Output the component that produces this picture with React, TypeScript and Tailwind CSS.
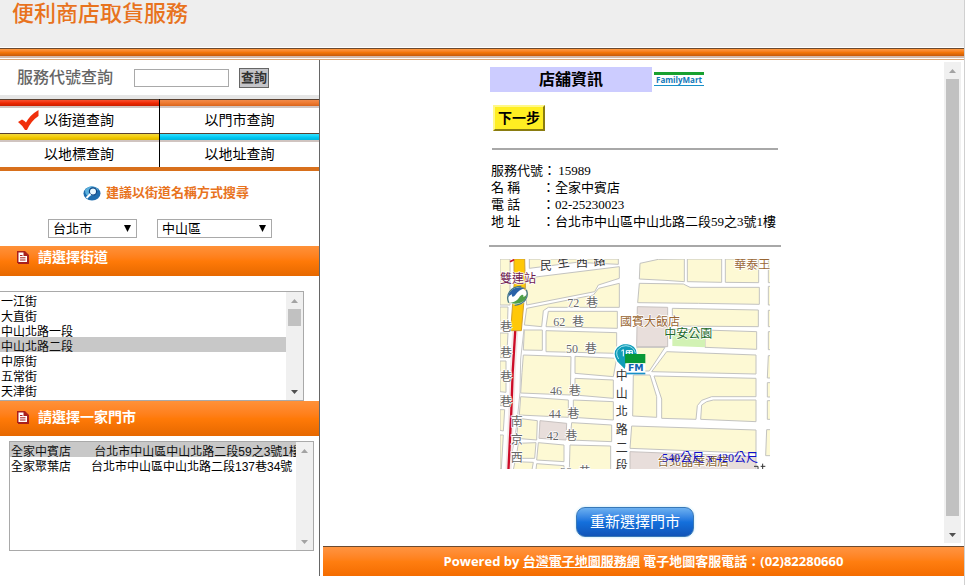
import { useState } from 'react';
import clsx from 'clsx';

const streets = ['一江街', '大直街', '中山北路一段', '中山北路二段', '中原街', '五常街', '天津街'];

const stores = [
  { id: '15989', label: '全家中賓店' + '\u00a0'.repeat(7) + '台北市中山區中山北路二段59之3號1樓' },
  { id: '12034', label: '全家聚葉店' + '\u00a0'.repeat(6) + '台北市中山區中山北路二段137巷34號' },
];

const tabs = [
  { label: '以街道查詢', stripe: 'from-[#f5502c] via-[#f02800] to-[#c81e00]', pad: 'pl-[44px]' },
  { label: '以門市查詢', stripe: 'from-[#f08a4a] via-[#ee7a30] to-[#d8641c]', pad: 'pl-[45px]' },
  { label: '以地標查詢', stripe: 'from-[#f0d838] via-[#f5cc00] to-[#dcb400]', pad: 'pl-[44px]' },
  { label: '以地址查詢', stripe: 'from-[#30e0ff] via-[#00ccf5] to-[#00b4dc]', pad: 'pl-[45px]' },
];

const details = [
  { label: '服務代號', value: '\u00a015989' },
  { label: '名 稱', value: '全家中賓店' },
  { label: '電 話', value: '02-25230023' },
  { label: '地 址', value: '台北市中山區中山北路二段59之3號1樓' },
];

// city blocks, map units are a third of a pixel
const blocks = [
  '0,0 30,0 30,138 0,138',
  '0,144 24,144 22,210 0,210',
  '0,222 24,222 20,296 0,296',
  '0,306 18,306 18,400 0,398',
  '0,410 16,410 14,440 0,440',
  '0,452 14,452 10,516 0,514',
  '0,528 10,528 4,630 0,630',
  '88,0 355,0 355,16 230,10 88,28',
  '75,58 358,23 358,58 295,78 284,98 80,138',
  '80,148 280,108 296,88 358,73 358,145 145,145 130,155 125,203 73,198',
  '145,157 352,157 352,208 138,203',
  '73,213 127,213 127,274 70,273',
  '138,215 350,221 350,283 138,278',
  '70,288 213,293 211,408 62,402 66,340',
  '225,292 350,298 340,353 225,343',
  '225,358 340,363 340,418 225,408',
  '62,413 205,423 205,475 58,468',
  '220,423 340,428 340,483 220,475',
  '55,478 112,485 110,543 50,538',
  '215,491 335,498 335,548 210,543',
  '55,553 108,551 104,598 48,598',
  '115,551 192,558 192,608 110,603',
  '210,558 332,561 332,632 208,632',
  '45,608 100,610 96,632 40,632',
  '110,614 192,620 192,632 108,632',
  '420,13 475,1 553,0 553,68 495,64 418,60',
  '562,0 665,0 665,70 562,68',
  '676,0 776,0 776,71 676,70',
  '418,73 550,75 570,85 778,85 778,136 595,133 413,131',
  '517,148 775,153 775,203 517,201',
  '517,210 770,218 770,271 615,265 615,223 517,223',
  '410,265 495,265 448,336 430,336 410,290',
  '500,278 768,288 768,345 455,338',
  '462,351 768,358 768,413 635,413 605,424 592,440 588,481 485,478 485,420',
  '400,348 450,348 470,413 470,475 398,471',
  '640,423 768,423 768,488 602,481 605,438 620,428',
  '395,501 768,513 768,583 390,568',
  '805,0 812,0 812,71 805,71',
  '805,82 812,82 812,138 805,138',
  '805,154 812,154 812,203 805,203',
  '805,218 812,218 812,272 805,272',
  '805,290 812,290 812,357 802,357',
  '802,371 812,371 812,414 802,414',
  '802,425 812,425 812,481 802,481',
  '800,512 812,512 812,590 797,590',
];

const shadedBlocks = [
  '412,143 503,145 503,263 410,263',
  '120,485 200,493 198,543 117,538',
  '390,578 768,593 768,632 390,632',
];

const lanes = [
  { no: '72', x: 202, y: 143 },
  { no: '62', x: 160, y: 200 },
  { no: '50', x: 198, y: 282 },
  { no: '46', x: 150, y: 408 },
  { no: '44', x: 146, y: 477 },
  { no: '42', x: 140, y: 543 },
  { no: '38', x: 180, y: 652 },
];

function Arrow({ up, color }: { up?: boolean; color: string }) {
  return (
    <svg width="7" height="4" viewBox="0 0 7 4" fill={color}>
      <path d={up ? 'M3.5 0L7 4H0Z' : 'M0 0H7L3.5 4Z'} />
    </svg>
  );
}

function ScrollRail({ thumb, up, down }: { thumb?: string; up: string; down: string }) {
  return (
    <div aria-hidden="true" className="flex w-[17px] shrink-0 flex-col items-center bg-[#f0f0f0]">
      <div className="flex h-[17px] w-full items-center justify-center">
        <Arrow up color={up} />
      </div>
      <div className="flex w-[13px] flex-1 flex-col">
        {thumb && <div className={clsx('bg-[#c1c1c1]', thumb)} />}
      </div>
      <div className="flex h-[17px] w-full items-center justify-center">
        <Arrow color={down} />
      </div>
    </div>
  );
}

function DropDown({ label, options, className }: { label: string; options: string[]; className: string }) {
  return (
    <div className={clsx('relative', className)}>
      <select
        aria-label={label}
        className="block h-[19px] w-full appearance-none border border-[#a9a9a9] bg-white pl-[4px] text-[13px] leading-[17px] text-black"
      >
        {options.map(o => (
          <option key={o}>{o}</option>
        ))}
      </select>
      <svg className="pointer-events-none absolute top-[6px] right-[6px]" width="7" height="7" viewBox="0 0 7 7">
        <path d="M0 0H7L3.5 7Z" />
      </svg>
    </div>
  );
}

function SectionBar({ title, className }: { title: string; className: string }) {
  return (
    <div className={clsx('flex gap-[9px] bg-gradient-to-b from-[#ff9138] via-[#ff7a08] to-[#e66800] pl-[17px]', className)}>
      <svg className="mt-[3px]" width="12" height="13" viewBox="0 0 12 13">
        <path d="M0 0H8L12 4V13H1V12H0Z" fill="#a8201c" />
        <path d="M1.5 1.5H6.5V5H10V11H1.5Z" fill="#fff" />
        <path d="M3 4.5H5.5M3 6.8H8.5M3 9H8.5" stroke="#a8201c" />
      </svg>
      <h2 className="text-[14px] leading-[18px] font-bold text-white">{title}</h2>
    </div>
  );
}

function StoreMap() {
  return (
    <svg width="270" height="210" viewBox="0 0 810 630" role="img" aria-label="店舖位置地圖" className="overflow-hidden">
      <rect width="810" height="630" fill="#fff" />
      <g fill="#fdf9d4" stroke="#c3c3c0" strokeWidth="3">
        {blocks.map(points => (
          <polygon key={points} points={points} />
        ))}
      </g>
      <g fill="#e8dedb" stroke="#c8c2c0" strokeWidth="3">
        {shadedBlocks.map(points => (
          <polygon key={points} points={points} />
        ))}
      </g>
      <path d="M517 223H615V265L517 261Z" fill="#d2f2b4" />
      <path d="M72 210L62 300L60 400L50 500L28 630" fill="none" stroke="#c8c8c8" strokeWidth="3" />
      <path d="M46 210L38 340L34 455L25 640" fill="none" stroke="#f4e8e8" strokeWidth="18" />
      <path d="M46 210L38 340L34 455L25 640" fill="none" stroke="#cc0c28" strokeWidth="7" />
      <path d="M42 0H74L76 80L64 215H32L42 80Z" fill="#ffc808" stroke="#d0a030" strokeWidth="3" />
      <path d="M30 8L42 2" stroke="#cc0c28" strokeWidth="5" />

      <ellipse cx="52" cy="111" rx="31" ry="27" fill="#fff" />
      <path d="M24 116C26 90 52 78 78 88C62 90 54 98 46 108C40 116 34 114 36 106Q28 108 24 116Z" fill="#2a62a8" />
      <path d="M81 104C80 128 56 140 30 131C46 130 52 124 60 112C66 104 72 106 70 114Q77 112 81 104Z" fill="#50a048" />
      <path d="M26 131C16 106 32 82 64 82M79 92C88 114 74 136 44 139" fill="none" stroke="#4a7a80" strokeWidth="4" />

      <g className="font-['Noto_Sans_CJK_TC',sans-serif] text-[36px]" stroke="#fff" strokeWidth="4" paintOrder="stroke">
        <g fill="#333">
          <text x="120" y="34">民</text>
          <text x="174" y="26" transform="rotate(-8 174 26)">生</text>
          <text x="228" y="24">西</text>
          <text x="282" y="22" transform="rotate(-10 282 22)">路</text>
          {['中', '山', '北', '路', '二', '段'].map((c, i) => (
            <text key={c} x="347" y={363 + i * 54}>{c}</text>
          ))}
        </g>
        <g fill="#666">
          {lanes.map(l => (
            <g key={l.no}>
              <text x={l.x} y={l.y} className="font-['Liberation_Serif',serif]">{l.no}</text>
              <text x={l.x + 56} y={l.y}>巷</text>
            </g>
          ))}
          {[216, 294, 366, 441].map(y => (
            <text key={y} x="0" y={y}>巷</text>
          ))}
          {['南', '京', '西'].map((c, i) => (
            <text key={c} x="32" y={501 + i * 54}>{c}</text>
          ))}
        </g>
        <text x="0" y="72" fill="#702050">雙連站</text>
        <text x="360" y="201" fill="#996633">國賓大飯店</text>
        <text x="493" y="237" fill="#226a2a">中安公園</text>
        <text x="703" y="30" fill="#996633">華泰王</text>
        <text x="472" y="621" fill="#8a6634">台北晶華酒店</text>
      </g>
      <path d="M762 622H774V634M782 622H796M788 614V634" fill="none" stroke="#333" strokeWidth="3" />
      <text x="486" y="608" fill="#1010c8" className="font-['Liberation_Serif','Noto_Sans_CJK_TC',serif] text-[36px]">
        540公尺 x 420公尺
      </text>

      <path d="M375 334L350 308Q334 282 350 265Q362 253 378 253Q412 256 412 285V290H378V322Z" fill="#109cb8" stroke="#fff" strokeWidth="4" />
      <path d="M356 300Q344 280 356 269Q364 260 378 260Q402 262 406 282" fill="none" stroke="#a0e4f0" strokeWidth="3" />
      <path d="M364 276L370 272V292M379 275H397V288H379ZM388 275V288M379 281H397" fill="none" stroke="#fff" strokeWidth="3" />
      <rect x="375" y="285" width="61" height="28" fill="#089838" />
      <rect x="379" y="313" width="57" height="28" fill="#fff" />
      <text x="384" y="337" fill="#1060b0" className="font-['DejaVu_Sans',sans-serif] text-[28px] font-bold">FM</text>
      <rect x="379" y="341" width="57" height="5" fill="#1890c8" />
    </svg>
  );
}

export default function App() {
  const [street, setStreet] = useState('中山北路二段');
  const [store, setStore] = useState('15989');

  return (
    <div className="flex min-h-screen flex-col border-r border-[#d0d0d0] bg-white font-['Liberation_Sans','Noto_Sans_CJK_TC',sans-serif] text-black">
      <header>
        <div className="h-[47px] bg-[#eeeeee] pl-[12px]">
          <h1 className="text-[22px] leading-[28px] font-medium text-[#e8731e]">便利商店取貨服務</h1>
        </div>
        <div className="mt-px h-[8px] border-t border-[#6b4a30] bg-gradient-to-b from-[#ff9a40] via-[#f47608] to-[#c85a08]" />
        <div className="h-[2px] bg-[#d4b8a8]" />
        <div className="mt-px h-px bg-[#dca878]" />
      </header>

      <div className="flex">
        <aside className="w-[320px] shrink-0 border-r border-[#666] pb-[25px]">
          <form className="flex h-[35px] items-center pl-[17px]" onSubmit={e => e.preventDefault()}>
            <label htmlFor="service-code" className="w-[117px] text-[16px] leading-[20px] font-medium text-[#666]">
              服務代號查詢
            </label>
            <input id="service-code" type="text" className="h-[18px] w-[95px] border border-[#a9a9a9] px-1 text-[12px]" />
            <button
              type="submit"
              className="ml-[10px] h-[20px] w-[30px] border border-[#666] bg-[#c4c4c8] text-[13px] leading-[18px] font-bold text-[#333]"
            >
              查詢
            </button>
          </form>
          <div className="h-[4px] bg-[#e6e6e6]" />

          <nav className="grid grid-cols-2 border-b-4 border-[#d8701c]">
            {tabs.map((tab, i) => (
              <a
                key={tab.label}
                href="#"
                className={clsx('relative flex h-[34px] flex-col', i % 2 === 0 && 'border-r border-black')}
              >
                <span className={clsx('h-[7px] border-t border-[#5a4030] bg-gradient-to-b', tab.stripe)} />
                <span className="h-[2px] bg-[#d0c4c0]" />
                <span className={clsx('pt-[3px] text-[14px] leading-[19px]', tab.pad)}>{tab.label}</span>
                {i === 0 && (
                  <svg className="absolute top-[11px] left-[18px]" width="21" height="21" viewBox="0 0 21 21">
                    <path d="M0 12L4 9.5Q7 11 8 12.5Q12 5 20.5 0V6Q13 11 9 20H7Q4 15 0 12Z" fill="#f0300c" />
                  </svg>
                )}
              </a>
            ))}
          </nav>

          <div className="flex h-[43px] items-center justify-center gap-[5px] pl-[13px]">
            <svg width="18" height="16" viewBox="0 0 18 16">
              <ellipse cx="9" cy="8.5" rx="8.5" ry="7" fill="#1c6cae" />
              <path d="M2 5Q8-2 15 4Q12 12 8 11Q2 12 2 5Z" fill="#5cb0dc" />
              <circle cx="10" cy="6.5" r="3.6" fill="#e8f8ff" stroke="#0c4484" strokeWidth="1.2" />
              <path d="M7.5 9L3.5 13" stroke="#fff" strokeWidth="2" />
            </svg>
            <p className="text-[13px] leading-[18px] font-bold text-[#e8731e]">建議以街道名稱方式搜尋</p>
          </div>

          <div className="flex h-[32px] gap-[20px] pt-[5px] pl-[48px]">
            <DropDown label="縣市" options={['台北市']} className="w-[89px]" />
            <DropDown label="行政區" options={['中山區']} className="w-[115px]" />
          </div>

          <SectionBar title="請選擇街道" className="h-[30px] pt-[2px]" />

          <div className="mt-[15px] flex h-[110px] w-[304px] border border-l-0 border-[#a9a9a9]">
            <select
              size={7}
              aria-label="街道"
              value={street}
              onChange={e => setStreet(e.target.value)}
              className="min-w-0 flex-1 overflow-hidden text-[12px] [scrollbar-width:none]"
            >
              {streets.map(s => (
                <option key={s} className="h-[15px] min-h-0 p-0 pl-px leading-[15px] checked:bg-[#c8c8c8]">{s}</option>
              ))}
            </select>
            <ScrollRail thumb="h-[17px]" up="#a3a3a3" down="#505050" />
          </div>

          <SectionBar title="請選擇一家門市" className="h-[35px] pt-[7px]" />

          <div className="mt-[5px] ml-[9px] flex h-[110px] w-[305px] border border-[#a9a9a9]">
            <select
              size={7}
              aria-label="門市"
              value={store}
              onChange={e => setStore(e.target.value)}
              className="min-w-0 flex-1 overflow-hidden text-[12px] [scrollbar-width:none]"
            >
              {stores.map(s => (
                <option key={s.id} value={s.id} className="h-[15px] min-h-0 p-0 pl-px leading-[15px] checked:bg-[#c8c8c8]">
                  {s.label}
                </option>
              ))}
            </select>
            <ScrollRail up="#a3a3a3" down="#a3a3a3" />
          </div>
        </aside>

        <div className="flex min-w-0 flex-1 flex-col pl-[3px]">
          <div className="flex flex-1 pt-[2px] pr-[3px] pb-[3px]">
            <main className="flex flex-1 justify-center pl-[3px]">
              <div className="flex w-[292px] flex-col">
                <div className="mt-[5px] ml-px flex items-center gap-[2px]">
                  <h2 className="w-[162px] bg-[#ccccff] text-center text-[16px] leading-[25px] font-bold">店舖資訊</h2>
                  <svg width="50" height="15" viewBox="0 0 50 15" role="img" aria-label="FamilyMart">
                    <rect width="50" height="3" fill="#18a030" />
                    <text
                      x="25"
                      y="11"
                      textAnchor="middle"
                      fill="#1078b8"
                      className="font-['Open_Sans',sans-serif] text-[8px] font-bold"
                    >
                      FamilyMart
                    </text>
                    <rect y="13" width="50" height="1" fill="#1890c8" />
                  </svg>
                </div>
                <button
                  type="button"
                  className="mt-[13px] ml-[4px] h-[26px] w-[52px] border-2 border-t-[#fff888] border-r-[#8a7c10] border-b-[#8a7c10] border-l-[#fff888] bg-[#ffee22] text-[14px] leading-[20px] font-bold"
                >
                  下一步
                </button>
                <hr className="mt-[17px] mr-[3px] ml-[3px] border-t-2 border-[#a8a8a8]" />
                <dl className="mt-[12px] ml-[2px] font-['Liberation_Serif','Noto_Sans_CJK_TC',serif] text-[13px] leading-[17px]">
                  {details.map(d => (
                    <div key={d.label} className="flex whitespace-nowrap">
                      <dt className="flex w-[64px] justify-between">
                        <span>{d.label}</span>
                        <span>：</span>
                      </dt>
                      <dd>{d.value}</dd>
                    </div>
                  ))}
                </dl>
                <hr className="mt-[15px] border-t-2 border-[#a8a8a8]" />
                <div className="mt-[12px] ml-[11px]">
                  <StoreMap />
                </div>
                <button
                  type="button"
                  className="mt-[38px] h-[30px] w-[118px] self-center rounded-[9px] border border-[#3878b8] bg-gradient-to-b from-[#6cb0f0] via-[#1470dc] to-[#1054b8] text-[15px] leading-[26px] text-white shadow-[0_0_3px_#b8e4f8]"
                >
                  重新選擇門市
                </button>
              </div>
            </main>
            <ScrollRail thumb="h-[437px]" up="#a3a3a3" down="#505050" />
          </div>
          <footer className="h-[30px] border-t border-[#6b4a30] bg-gradient-to-b from-[#ff9440] via-[#ff7e10] to-[#f46c00] text-center font-['Open_Sans','Noto_Sans_CJK_TC',sans-serif] text-[13px] leading-[29px] font-bold whitespace-nowrap text-white">
            Powered by{' '}
            <a href="#" className="underline">
              台灣電子地圖服務網
            </a>{' '}
            電子地圖客服電話：(02)82280660
          </footer>
        </div>
      </div>
    </div>
  );
}
